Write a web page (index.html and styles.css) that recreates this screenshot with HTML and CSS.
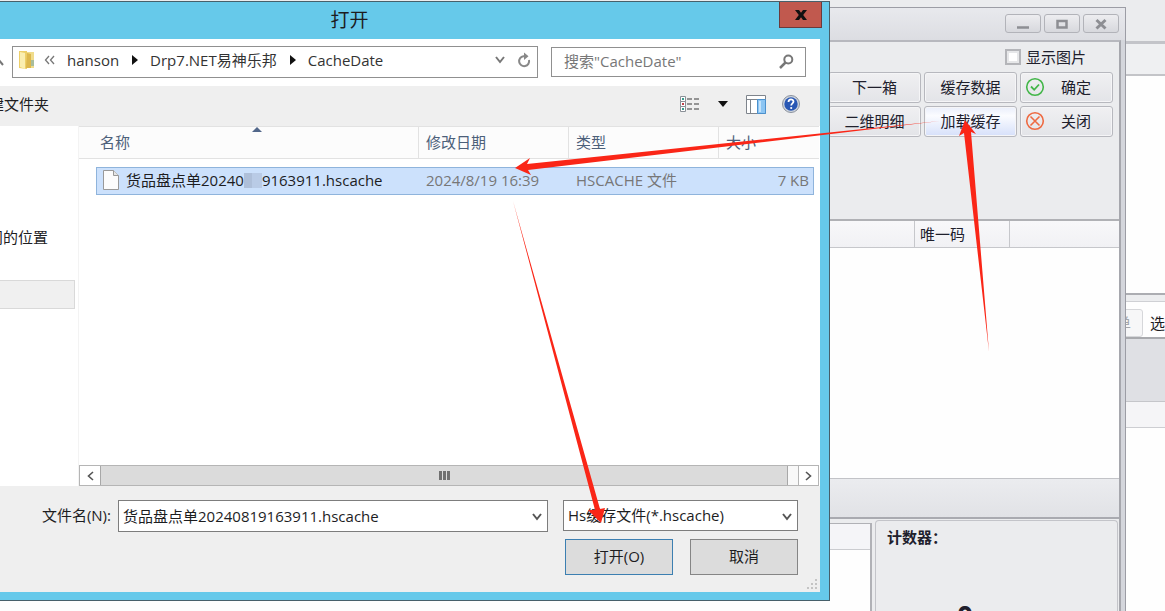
FILE: index.html
```html
<!DOCTYPE html>
<html lang="zh-CN">
<head>
<meta charset="utf-8">
<title>打开</title>
<link rel="stylesheet" href="styles.css">
</head>
<body>
<div class="desktop">

  <aside class="backdrop">
    <div class="backdrop-title"></div>
    <div class="backdrop-tools"></div>
    <div class="backdrop-page"></div>
    <div class="backdrop-split"></div>
    <div class="backdrop-bar"><button class="chip" type="button">单</button><span class="chip-label">选</span></div>
    <div class="backdrop-group"></div>
    <div class="backdrop-head"></div>
  </aside>

  <section class="app">
    <header class="app-title">
      <button class="caption" type="button" aria-label="最小化"><svg width="14" height="12" viewBox="0 0 14 12"><path d="M1 9.500h12" stroke="#8d8e93" stroke-width="2.500"/></svg></button>
      <button class="caption" type="button" aria-label="最大化"><svg width="14" height="12" viewBox="0 0 14 12"><path d="M2.500 3h9v6.500h-9z" fill="none" stroke="#8d8e93" stroke-width="2.500"/></svg></button>
      <button class="caption" type="button" aria-label="关闭窗口"><svg width="14" height="12" viewBox="0 0 14 12"><path d="M2.500 2l9 8.500M11.500 2l-9 8.500" stroke="#8d8e93" stroke-width="3"/></svg></button>
    </header>
    <div class="app-body">
      <div class="panel">
        <label class="check"><input type="checkbox">显示图片</label>
        <div class="actions">
          <button class="btn" type="button">下一箱</button>
          <button class="btn" type="button">缓存数据</button>
          <button class="btn btn-icon" type="button"><svg width="20" height="20" viewBox="0 0 20 20"><circle cx="10" cy="10" r="8.300" fill="none" stroke="#43b649" stroke-width="1.600"/><path d="M6 9.500l3.200 3.300L14 7.500" fill="none" stroke="#43b649" stroke-width="1.800"/></svg><span>确定</span></button>
          <button class="btn" type="button">二维明细</button>
          <button class="btn btn-hot" type="button">加载缓存</button>
          <button class="btn btn-icon" type="button"><svg width="20" height="20" viewBox="0 0 20 20"><circle cx="10" cy="10" r="8.300" fill="none" stroke="#ee6a42" stroke-width="1.600"/><path d="M5.500 5.500l9 9M14.500 5.500l-9 9" fill="none" stroke="#ee6a42" stroke-width="1.600"/></svg><span>关闭</span></button>
        </div>
      </div>
      <div class="grid-head"><span class="grid-cell"></span><span class="grid-cell">唯一码</span><span class="grid-cell"></span></div>
      <div class="grid-rows"></div>
      <div class="grid-foot"></div>
      <div class="lower">
        <div class="lower-grid"><div class="lower-head"></div></div>
        <div class="counter"><strong>计数器：</strong><output class="count">0</output></div>
      </div>
    </div>
  </section>

  <section class="dialog">
    <header class="dialog-title">
      <h1>打开</h1>
      <button class="close" type="button" aria-label="关闭"><svg width="12" height="12" viewBox="0 0 12 12"><path d="M0 1h4l2 2.700L8 1h4L8.200 6l3.800 5H8L6 8.300 4 11H0l3.800-5z" fill="#111"/></svg></button>
    </header>
    <div class="dialog-body">
      <div class="address">
        <svg class="up" width="12" height="10" viewBox="0 0 12 10"><path d="M0 8l4-6 5 6" fill="none" stroke="#777" stroke-width="2"/></svg>
        <nav class="path">
          <svg width="18" height="20" viewBox="0 0 18 20"><path d="M1 1h8v18l-8-1z" fill="#edcf69"/><path d="M9 2h7v16H9z" fill="#f0dc8c"/><path d="M2 2l5 1v16l-5-2z" fill="#faeeb0"/><path d="M9 3l4 1v14H8z" fill="#dcb74d"/><path d="M13 10h3v6h-3z" fill="#a9bd9b"/></svg>
          <svg width="11" height="10" viewBox="0 0 11 10"><path d="M5 1L1.500 5 5 9M10 1L6.500 5 10 9" fill="none" stroke="#777" stroke-width="1.300"/></svg>
          <a href="#hanson">hanson</a>
          <svg width="6" height="10" viewBox="0 0 6 10"><path d="M0 0l6 5-6 5z" fill="#111"/></svg>
          <a href="#drp7">Drp7.NET易神乐邦</a>
          <svg width="6" height="10" viewBox="0 0 6 10"><path d="M0 0l6 5-6 5z" fill="#111"/></svg>
          <a href="#cache">CacheDate</a>
          <span class="fill"></span>
          <button class="plain" type="button" aria-label="历史"><svg width="10" height="8" viewBox="0 0 10 8"><path d="M1 1l4 5 4-5" fill="none" stroke="#777" stroke-width="2"/></svg></button>
          <button class="plain" type="button" aria-label="刷新"><svg width="14" height="16" viewBox="0 0 14 16"><path d="M8 4.200H6.500A5 5 0 1 0 12 8" fill="none" stroke="#888" stroke-width="2"/><path d="M7 .5l4.500 3.700L7 8z" fill="#888"/></svg></button>
        </nav>
        <div class="search">
          <input type="search" aria-label="搜索" placeholder="搜索&quot;CacheDate&quot;">
          <svg width="15" height="15" viewBox="0 0 15 15"><circle cx="9.300" cy="5.500" r="4" fill="none" stroke="#777" stroke-width="2"/><path d="M6.500 8.500L1 14" stroke="#777" stroke-width="2.500"/></svg>
        </div>
      </div>

      <div class="toolbar">
        <button class="plain new" type="button">建文件夹</button>
        <span class="fill"></span>
        <button class="plain" type="button" aria-label="视图"><svg width="20" height="17" viewBox="0 0 20 17"><g fill="#fff" stroke="#8a9097"><path d="M.5.5h5v5h-5zM.5 5.500h5v5h-5zM.5 10.500h5v5h-5z"/></g><path d="M2 3h2M2 13h2" stroke="#3a9c8e" stroke-width="2"/><path d="M2 8h2" stroke="#c0434b" stroke-width="2"/><path d="M7 3h5M14 3h5M7 8h5M14 8h5M7 13h5M14 13h5" stroke="#777" stroke-width="1.300"/></svg></button>
        <button class="plain" type="button" aria-label="更多视图"><svg width="10" height="6" viewBox="0 0 10 6"><path d="M0 0h10L5 6z" fill="#111"/></svg></button>
        <button class="plain" type="button" aria-label="预览窗格"><svg width="20" height="19" viewBox="0 0 20 19"><path d="M.5.5h19v18H.5z" fill="#fff" stroke="#7e848c"/><path d="M1 4.500h18M4.500 4v14" stroke="#7e848c"/><path d="M11.500 4.500h8v14h-8z" fill="#8cc5f3" stroke="#4c91cd"/><path d="M13 6h2v11h-2z" fill="#c3e2fb"/></svg></button>
        <button class="plain help" type="button" aria-label="帮助"><svg width="18" height="18" viewBox="0 0 18 18"><circle cx="9" cy="9" r="8.500" fill="#cfd5de" stroke="#8b929e"/><circle cx="9" cy="9" r="6.700" fill="#2857b4"/><path d="M6.500 7c0-3.300 5-3.300 5-.4 0 1.800-2.300 1.900-2.300 4" fill="none" stroke="#fff" stroke-width="1.800"/><circle cx="9.200" cy="13" r="1.100" fill="#fff"/></svg></button>
      </div>

      <div class="browser">
        <div class="places">
          <div class="place">问的位置</div>
          <div class="place-selected"></div>
        </div>
        <div class="files">
          <table>
            <colgroup><col class="c-gutter"><col><col class="c-date"><col class="c-type"><col class="c-size"><col class="c-end"></colgroup>
            <thead>
              <tr><th colspan="2" class="name">名称<svg class="sort" width="10" height="5" viewBox="0 0 10 5"><path d="M0 5l5-5 5 5z" fill="#52678a"/></svg></th><th>修改日期</th><th>类型</th><th colspan="2">大小</th></tr>
            </thead>
            <tbody>
              <tr><td></td><td class="sel first"><div class="file"><svg width="16" height="20" viewBox="0 0 16 20"><path d="M.5.5h10l5 5v14H.5z" fill="#fcfcfc" stroke="#999"/><path d="M10.500.5v5h5" fill="#e6e6e6" stroke="#999"/></svg><span>货品盘点单20240</span><i class="mosaic"></i><span>9163911.hscache</span></div></td><td class="sel">2024/8/19 16:39</td><td class="sel">HSCACHE 文件</td><td class="sel last">7 KB</td><td></td></tr>
            </tbody>
          </table>
          <span class="fill"></span>
          <div class="scroll">
            <button type="button" aria-label="向左"><svg width="7" height="10" viewBox="0 0 7 10"><path d="M6 1L1.500 5 6 9" fill="none" stroke="#555" stroke-width="1.600"/></svg></button>
            <div class="thumb"><i></i><i></i><i></i></div>
            <button type="button" aria-label="向右"><svg width="7" height="10" viewBox="0 0 7 10"><path d="M1 1l4.500 4L1 9" fill="none" stroke="#555" stroke-width="1.600"/></svg></button>
          </div>
        </div>
      </div>

      <form class="foot">
        <div class="foot-row">
          <label for="fname">文件名(N):</label>
          <div class="combo name-combo"><input id="fname" type="text" value="货品盘点单20240819163911.hscache"><svg width="10" height="8" viewBox="0 0 10 8"><path d="M1 1l4 5 4-5" fill="none" stroke="#555" stroke-width="2"/></svg></div>
          <div class="combo type-combo"><select aria-label="文件类型"><option>Hs缓存文件(*.hscache)</option></select><svg width="10" height="8" viewBox="0 0 10 8"><path d="M1 1l4 5 4-5" fill="none" stroke="#555" stroke-width="2"/></svg></div>
        </div>
        <div class="foot-row foot-buttons">
          <button class="primary" type="button">打开(O)</button>
          <button type="button">取消</button>
        </div>
        <svg class="grip" width="10" height="10" viewBox="0 0 10 10"><path d="M8 0h2v2H8zM8 4h2v2H8zM8 8h2v2H8zM4 4h2v2H4zM4 8h2v2H4zM0 8h2v2H0z" fill="#c4c4c4"/></svg>
      </form>
    </div>
  </section>

  <svg class="arrows" viewBox="0 0 1165 611" preserveAspectRatio="none" fill="#fa2617">
    <path d="M940 121L527 164 530 158 515 168 531 175 528 170z"/>
    <path d="M513 201L595 510 588 510 601 523 605 508 600 509z"/>
    <path d="M989 352L971 132 976 134 965 120 959 136 964 133z"/>
  </svg>
</div>
</body>
</html>
```
FILE: styles.css
```css
* { box-sizing: border-box; }
body {
  margin: 0;
  font: 15px/20px "Open Sans", "Noto Sans CJK SC", sans-serif;
  color: #1d1d1f;
}
button, input, select { font: inherit; color: inherit; margin: 0; padding: 0; border: 0; background: none; }
svg { display: block; flex: none; }
a { color: inherit; text-decoration: none; }
.fill { flex: 1; }
.desktop { position: relative; height: 100vh; min-height: 560px; overflow: hidden; background: #ebecee; }

/* Window behind everything, visible on the right */
.backdrop { position: absolute; inset: 0; display: flex; flex-direction: column; background: #fefefe; }
.backdrop > div { flex: none; }
.backdrop-title { height: 44px; background: #ebecee; border-bottom: 3px solid #c3c4c9; }
.backdrop-tools { height: 32px; background: #eff0f2; border-bottom: 2px solid #c3c4c8; }
.backdrop-page { height: 217px; }
.backdrop-split { height: 9px; background: #ecedef; border-top: 2px solid #acadb2; border-bottom: 1px solid #cfd0d4; }
.backdrop-bar { height: 37px; display: flex; justify-content: flex-end; align-items: center; border-bottom: 2px solid #a9aaae; padding-top: 6px; }
.chip { width: 48px; height: 28px; padding-right: 11px; text-align: right; color: #a5a6aa; background: #f7f7f8; border: 1px solid #d6d7da; border-radius: 3px; }
.chip-label { width: 22px; padding-left: 7px; white-space: nowrap; }
.backdrop-group { height: 63px; background: #dfe0e4; border-bottom: 1px solid #c5c6ca; }
.backdrop-head { height: 26px; background: #f5f5f7; border-bottom: 1px solid #cdced2; }

/* Stock-taking window */
.app { position: absolute; inset: 7px 39px 0 0; display: flex; flex-direction: column; border: 1px solid #9c9da5; border-width: 1px 1px 0 0; background: #d4d6dc; color: #20202c; }
.app-title { height: 32px; flex: none; display: flex; justify-content: flex-end; align-items: flex-start; gap: 3px; padding: 6px 6px 0; background: linear-gradient(#e8e9ed, #dcdde2); }
.caption { width: 36px; height: 19px; display: grid; place-items: center; border: 1px solid #b2b3b9; border-radius: 3px; background: linear-gradient(#ededf0, #d7d8dd); }
.app-body { flex: 1; display: flex; flex-direction: column; margin-right: 4px; border-top: 2px solid #b7b8be; border-right: 2px solid #a6a7ad; background: #ebecee; }
.panel { height: 179px; padding: 5px 6px 0; border-bottom: 2px solid #b0b1b5; }
.check { display: flex; align-items: center; justify-content: flex-end; gap: 5px; height: 20px; padding-right: 27px; }
.check input { appearance: none; width: 16px; height: 16px; border: 2px solid #b4b5b9; box-shadow: inset 0 0 0 2px #e6e7e9; background: #fff; }
.actions { display: grid; grid-template-columns: repeat(3, 93px); grid-auto-rows: 31px; gap: 3px; justify-content: end; padding-top: 5px; }
.btn { padding-bottom: 1px; border: 1px solid #b7b8be; border-radius: 3px; background: linear-gradient(#f0f0f2, #e3e4e8); box-shadow: inset 0 0 0 1px #f5f5f7; }
.btn-hot { background: linear-gradient(#e9eefb, #fbfcff 30%, #d6e0fa); }
.btn-icon { display: flex; align-items: center; padding-left: 4px; gap: 16px; }
.grid-head { height: 27px; flex: none; display: flex; background: linear-gradient(#f8f8fa, #f1f1f4); border-bottom: 1px solid #c6c7cb; }
.grid-cell { width: 110px; padding: 3px 5px; border-left: 1px solid #c6c7cb; }
.grid-cell:first-child { flex: 1; border: 0; }
.grid-cell:nth-child(2) { width: 95px; }
.grid-rows { flex: 1; background: #fefefe; }
.grid-foot { height: 41px; flex: none; background: linear-gradient(#ebecef, #e1e2e6); border-top: 1px solid #c2c3c7; border-bottom: 2px solid #a9aab0; }
.lower { height: 92px; flex: none; display: flex; }
.lower-grid { flex: 1; margin-top: 4px; border: solid #b0b1b6; border-width: 1px 2px 0 0; background: #fefefe; }
.lower-head { height: 26px; background: #f5f5f8; border-bottom: 1px solid #cbccd0; }
.counter { width: 243px; margin: 1px 1px 0 3px; padding: 5px 0 0 11px; border: 1px solid #c3c4c9; border-bottom: 0; border-radius: 4px 4px 0 0; overflow: hidden; }
.counter strong { display: block; line-height: 22px; font-weight: 700; }
.count { display: block; padding: 52px 0 0 70px; font-size: 28px; line-height: 32px; font-weight: 700; }

/* File dialog */
.dialog { position: absolute; inset: 1px 335px 10px 0; display: flex; flex-direction: column; padding: 0 9px 8px 0; background: #66c9ea; border: 1px solid #47606b; border-left: 0; }
.dialog-title { height: 37px; flex: none; display: flex; align-items: flex-start; }
.dialog-title h1 { flex: 1; margin: 0 0 0 -80px; font-size: 19px; line-height: 36px; font-weight: 400; text-align: center; }
.close { width: 43px; height: 26px; margin-right: -2px; display: grid; place-items: center; background: #c1594e; border: 1px solid #6b3a3c; border-top: 0; }
.dialog-body { flex: 1; display: flex; flex-direction: column; background: #fff; min-height: 0; }
.address { height: 47px; flex: none; display: flex; align-items: center; gap: 13px; padding: 0 14px 2px 0; position: relative; }
.up { position: absolute; left: -6px; }
.path { flex: 1; margin-left: 12px; height: 32px; display: flex; align-items: center; padding: 0 8px 3px 5px; gap: 10px; border: 1px solid #909090; color: #333; white-space: nowrap; }
.path svg:first-child { margin-right: -2px; }
.path a { margin: 0 3px 0 2px; }
.path .plain + .plain { margin-left: 4px; }
.search { width: 255px; height: 30px; display: flex; align-items: center; padding: 0 11px 0 12px; border: 1px solid #909090; }
.search input { flex: 1; min-width: 0; padding-bottom: 2px; outline: 0; }
.search input::placeholder { color: #777; opacity: 1; }
.toolbar { height: 40px; flex: none; display: flex; align-items: center; gap: 18px; padding: 0 20px 4px 0; background: #efefef; }
.new { width: 49px; display: flex; justify-content: flex-end; overflow: hidden; white-space: nowrap; }
.toolbar .help { margin-left: -2px; }
.browser { flex: 1; display: flex; min-height: 0; }
.places { width: 79px; padding: 101px 3px 0 0; border-right: 1px solid #f3f3f3; }
.place { display: flex; justify-content: flex-end; width: 48px; overflow: hidden; white-space: nowrap; }
.place-selected { height: 29px; margin-top: 33px; background: #f0f0f0; border: 1px solid #d9d9d9; border-left: 0; }
.files { flex: 1; display: flex; flex-direction: column; min-width: 0; padding-right: 1px; }
table { width: 100%; table-layout: fixed; border-collapse: separate; border-spacing: 0; }
.c-gutter { width: 17px; }
.c-date, .c-type { width: 150px; }
.c-size { width: 96px; }
.c-end { width: 5px; }
th { height: 33px; padding: 0 0 2px 7px; text-align: left; font-weight: 400; color: #4c607a; background: #fcfcfc; border: solid #e2e2e2; border-width: 1px 0 1px 1px; }
th.name { padding-left: 21px; border-left: 0; position: relative; }
.sort { position: absolute; left: 51%; top: 0; }
tbody::before { content: ""; display: block; height: 8px; }
td { padding: 0; }
.sel { height: 28px; padding: 0 0 2px 8px; background: #cce1fc; border: solid #8fb4dc; border-width: 1px 0; color: #777; }
.first { padding-left: 6px; border-left-width: 1px; color: #1d1d1f; }
.last { border-right-width: 1px; padding-right: 4px; text-align: right; }
.file { display: flex; align-items: center; white-space: nowrap; }
.file svg { margin-right: 7px; }
.mosaic { width: 18px; height: 15px; background: linear-gradient(90deg, #aebfd9 45%, #b9cbe6 45%); }
.scroll { height: 21px; display: flex; background: #f8f8f8; border: 1px solid #b5b5b5; }
.scroll button { width: 20px; display: grid; place-items: center; background: #fff; }
.scroll button:last-child { border-left: 1px solid #b5b5b5; }
.thumb { flex: 1; margin-right: 10px; display: flex; justify-content: center; align-items: center; gap: 1px; background: #dbdbdb; border: solid #a8a8a8; border-width: 0 1px; }
.thumb i { width: 3px; height: 9px; background: #707070; }
.foot { position: relative; flex: none; height: 106px; padding: 14px 22px 0 0; background: #efefef; }
.foot-row { display: flex; align-items: flex-start; justify-content: flex-end; }
.foot label { padding: 5px 7px 0 0; }
.combo { position: relative; height: 32px; border: 1px solid #7d7d7d; background: #fff; }
.combo input, .combo select { width: 100%; height: 100%; padding: 0 20px 2px 4px; appearance: none; outline: 0; }
.combo svg { position: absolute; right: 5px; top: 12px; pointer-events: none; }
.name-combo { flex: 1; max-width: 430px; margin-right: 15px; }
.type-combo { width: 235px; height: 31px; }
.foot-buttons { gap: 17px; padding: 7px 0 0; }
.foot-buttons button { width: 108px; height: 36px; padding-bottom: 2px; background: #dcdcdc; border: 1px solid #858585; }
.foot-buttons .primary { border-color: #3c7fb1; }
.grip { position: absolute; right: 3px; bottom: 3px; }

.arrows { position: absolute; inset: 0; width: 100%; height: 100%; pointer-events: none; }
```
